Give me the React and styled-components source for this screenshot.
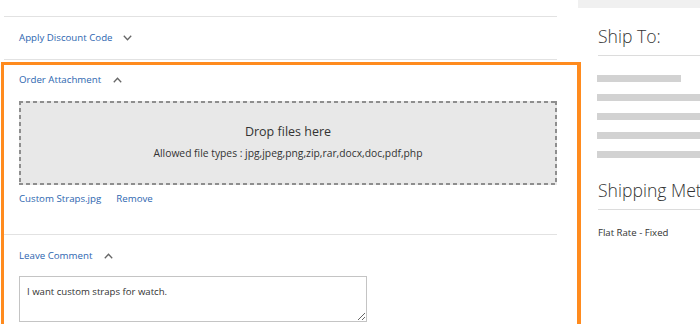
import React from 'react';
import styled, { createGlobalStyle } from 'styled-components';

const Global = createGlobalStyle`
  html, body { margin: 0; padding: 0; background: #fff; overflow: hidden; }
  body { font-family: "Open Sans", "Liberation Sans", sans-serif; color: #333; }
  * { box-sizing: border-box; }
`;

const Page = styled.div`
  width: 700px;
  height: 324px;
  overflow: hidden;
  display: grid;
  grid-template-columns: 553px 122px;
  column-gap: 21px;
  padding-left: 4px;
`;

const Main = styled.div`
  display: flex;
  flex-direction: column;
  padding-top: 16px;
`;

const Section = styled.section`
  border-top: 1px solid #e2e2e2;
  padding: ${(p) => p.$pt}px 0 ${(p) => p.$pb}px 15px;
  display: flex;
  flex-direction: column;
  align-items: flex-start;
`;

const Title = styled.div`
  display: flex;
  align-items: center;
  gap: ${(p) => p.$gap || 12}px;
  font-size: 9.7px;
  line-height: 12px;
  color: #2d66b0;
  cursor: pointer;
`;

const ChevronSvg = styled.svg`
  display: block;
  flex: none;
`;

const Chevron = ({ up }) => (
  <ChevronSvg width="9" height="6" viewBox="0 0 9 6">
    <polyline
      points={up ? '0.8,5.2 4.5,1.2 8.2,5.2' : '0.8,0.8 4.5,4.8 8.2,0.8'}
      fill="none"
      stroke="#666"
      strokeWidth="1.3"
    />
  </ChevronSvg>
);

const Highlight = styled.div`
  position: relative;
  &::after {
    content: '';
    position: absolute;
    left: -3px;
    top: 3px;
    width: 573px;
    height: 262px;
    border: 3.5px solid #ff8b1e;
    border-right-width: 4.5px;
    border-bottom-width: 4.5px;
    pointer-events: none;
  }
`;

const dash = '#8e8e8e 0 4px, transparent 4px 7px';

const DropZone = styled.div`
  margin-top: 15px;
  align-self: stretch;
  height: 84px;
  background:
    repeating-linear-gradient(90deg, ${dash}) top left / 100% 2px no-repeat,
    repeating-linear-gradient(90deg, ${dash}) bottom left / 100% 2px no-repeat,
    repeating-linear-gradient(180deg, ${dash}) top left / 2px 100% no-repeat,
    repeating-linear-gradient(180deg, ${dash}) top right / 2px 100% no-repeat,
    #e8e8e8;
  display: flex;
  flex-direction: column;
  align-items: center;
  padding-top: 22px;
`;

const DropTitle = styled.div`
  font-size: 12.5px;
  line-height: 18px;
  color: #333;
`;

const DropHint = styled.div`
  margin-top: 6px;
  font-size: 10.3px;
  line-height: 12px;
  color: #333;
`;

const FileRow = styled.div`
  margin-top: 8px;
  display: flex;
  gap: 15px;
  font-size: 9.7px;
  line-height: 12px;
`;

const Link = styled.a`
  color: #2d66b0;
  text-decoration: none;
  cursor: pointer;
`;

const Comment = styled.textarea`
  margin-top: 14px;
  width: 348px;
  height: 46px;
  border: 1px solid #c4c4c4;
  padding: 9px 7px;
  font-family: "Open Sans", "Liberation Sans", sans-serif;
  font-size: 9.6px;
  line-height: 12px;
  color: #333;
  resize: vertical;
  outline: none;
`;

const Side = styled.aside`
  display: flex;
  flex-direction: column;
  overflow: hidden;
`;

const TopBar = styled.div`
  height: 8px;
  background: #f0f0f0;
`;

const SideBlock = styled.div`
  padding-left: 20px;
  display: flex;
  flex-direction: column;
`;

const SideHeading = styled.h3`
  margin: ${(p) => p.$mt}px 0 0;
  padding-bottom: 9px;
  border-bottom: 1px solid #dcdcdc;
  font-size: 17.6px;
  line-height: 20px;
  font-weight: 300;
  color: #333;
  white-space: nowrap;
`;

const AddressBars = styled.div`
  margin-top: 19px;
  display: flex;
  flex-direction: column;
  gap: 12px;
  margin-left: -1px;
`;

const Bar = styled.div`
  height: 7px;
  background: #d2d2d2;
  width: ${(p) => p.$w || '120px'};
`;

const SideText = styled.div`
  margin-top: 17px;
  font-size: 9.6px;
  line-height: 12px;
  color: #333;
`;

export default function App() {
  return (
    <>
      <Global />
      <Page>
        <Main>
          <Section $pt={15} $pb={15}>
            <Title $gap={10}>
              Apply Discount Code <Chevron />
            </Title>
          </Section>
          <Highlight>
            <Section $pt={14} $pb={29}>
              <Title>
                Order Attachment <Chevron up />
              </Title>
              <DropZone>
                <DropTitle>Drop files here</DropTitle>
                <DropHint>Allowed file types : jpg,jpeg,png,zip,rar,docx,doc,pdf,php</DropHint>
              </DropZone>
              <FileRow>
                <Link>Custom Straps.jpg</Link>
                <Link>Remove</Link>
              </FileRow>
            </Section>
            <Section $pt={15} $pb={0}>
              <Title>
                Leave Comment <Chevron up />
              </Title>
              <Comment readOnly value="I want custom straps for watch." />
            </Section>
          </Highlight>
        </Main>
        <Side>
          <TopBar />
          <SideBlock>
            <SideHeading $mt={18}>Ship To:</SideHeading>
            <AddressBars>
              <Bar $w="84px" />
              <Bar />
              <Bar />
              <Bar />
              <Bar />
            </AddressBars>
            <SideHeading $mt={22}>Shipping Methods</SideHeading>
            <SideText>Flat Rate - Fixed</SideText>
          </SideBlock>
        </Side>
      </Page>
    </>
  );
}
